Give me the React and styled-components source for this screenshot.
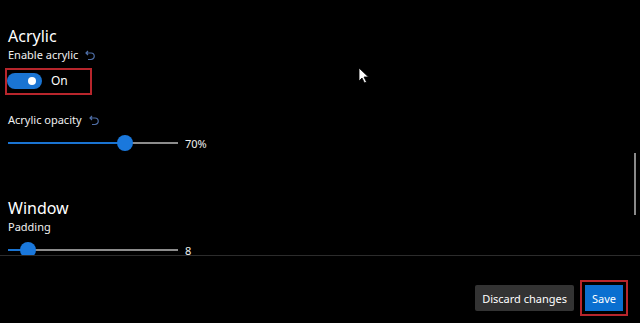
import React from "react";
import styled, { createGlobalStyle } from "styled-components";

const GlobalStyle = createGlobalStyle`
  html, body {
    margin: 0;
    padding: 0;
    background: #000;
  }
  body {
    font-family: "Noto Sans", "Open Sans", sans-serif;
    color: #fff;
  }
`;

const Page = styled.div`
  position: relative;
  width: 640px;
  height: 323px;
  background: #000;
  display: flex;
  flex-direction: column;
  overflow: hidden;
`;

const ScrollArea = styled.div`
  position: relative;
  height: 255px;
  overflow: hidden;
  padding: 25px 0 0 8px;
  box-sizing: border-box;
`;

const Scrollbar = styled.div`
  position: absolute;
  right: 4px;
  top: 153px;
  width: 2px;
  height: 62px;
  background: #8a8a8a;
`;

const SectionTitle = styled.div`
  font-size: 16px;
  line-height: 22px;
  margin-top: ${(p) => p.$gap || 0}px;
`;

const Label = styled.div`
  display: flex;
  align-items: center;
  gap: 7px;
  font-size: 11px;
  line-height: 16px;
  color: #f0f0f0;
  margin-top: ${(p) => p.$gap || 0}px;
`;

const Highlight = styled.div`
  display: inline-flex;
  align-self: flex-start;
  margin: 5px 0 0 -3px;
  border: 2px solid #b8262c;
  padding: 2px 22px 4px 0px;
`;

const ToggleRow = styled.div`
  display: flex;
  align-items: center;
  gap: 9px;
`;

const Pill = styled.div`
  position: relative;
  width: 35px;
  height: 16px;
  border-radius: 8px;
  background: #1a74d2;
`;

const Knob = styled.div`
  position: absolute;
  right: 6px;
  top: 4px;
  width: 8px;
  height: 8px;
  border-radius: 50%;
  background: #fff;
`;

const ToggleText = styled.span`
  font-size: 12px;
  color: #fff;
`;

const Column = styled.div`
  display: flex;
  flex-direction: column;
`;

const SliderRow = styled.div`
  display: flex;
  align-items: center;
  gap: 7px;
  height: 30px;
`;

const Track = styled.div`
  position: relative;
  width: 170px;
  height: 2px;
  background: #8c8c8c;
`;

const Fill = styled.div`
  position: absolute;
  left: 0;
  top: 0;
  height: 2px;
  background: #1a74d2;
`;

const Thumb = styled.div`
  position: absolute;
  top: -7px;
  width: 16px;
  height: 16px;
  margin-left: -8px;
  border-radius: 50%;
  background: #1a78dc;
`;

const Value = styled.span`
  font-size: 11px;
  color: #f0f0f0;
`;

const Footer = styled.div`
  flex: 1;
  border-top: 1px solid #2c2c2c;
  display: flex;
  justify-content: flex-end;
  align-items: flex-start;
  gap: 11px;
  padding: 29px 17px 0 0;
`;

const Button = styled.button`
  height: 26px;
  border: none;
  border-radius: ${(p) => (p.$marked ? "0" : "2px")};
  padding: 0 7px;
  font-family: inherit;
  font-size: 11px;
  color: #fff;
  background: ${(p) => (p.$primary ? "#0a6fd0" : "#333333")};
  outline: ${(p) => (p.$marked ? "2px solid #b8262c" : "none")};
  outline-offset: 3px;
`;

const Cursor = styled.svg`
  position: absolute;
  left: 358px;
  top: 67px;
`;

function UndoIcon() {
  return (
    <svg width="10" height="11" viewBox="0 0 10 11">
      <path
        d="M3 1 L1 3 L3 5 M1 3 H6 A3.2 3.2 0 0 1 6 9.5 H3"
        fill="none"
        stroke="#4f6fa8"
        strokeWidth="1.2"
      />
    </svg>
  );
}

function Slider({ value, label }) {
  return (
    <SliderRow>
      <Track>
        <Fill style={{ width: `${value}%` }} />
        <Thumb style={{ left: `${value}%` }} />
      </Track>
      <Value>{label}</Value>
    </SliderRow>
  );
}

export default function App() {
  return (
    <Page>
      <GlobalStyle />
      <ScrollArea>
        <Column>
          <SectionTitle>Acrylic</SectionTitle>
          <Label>
            Enable acrylic <UndoIcon />
          </Label>
          <Highlight>
            <ToggleRow>
              <Pill>
                <Knob />
              </Pill>
              <ToggleText>On</ToggleText>
            </ToggleRow>
          </Highlight>
          <Label $gap={17}>
            Acrylic opacity <UndoIcon />
          </Label>
          <Slider value={69} label="70%" />
          <SectionTitle $gap={39}>Window</SectionTitle>
          <Label>Padding</Label>
          <Slider value={12} label="8" />
        </Column>
        <Scrollbar />
      </ScrollArea>
      <Footer>
        <Button>Discard changes</Button>
        <Button $primary $marked>
          Save
        </Button>
      </Footer>
      <Cursor width="12" height="17" viewBox="0 0 12 17">
        <path
          d="M1 1 L1 14 L4 11 L6.5 16 L8.5 15 L6 10 L10.5 10 Z"
          fill="#fff"
          stroke="#000"
          strokeWidth="0.8"
        />
      </Cursor>
    </Page>
  );
}
